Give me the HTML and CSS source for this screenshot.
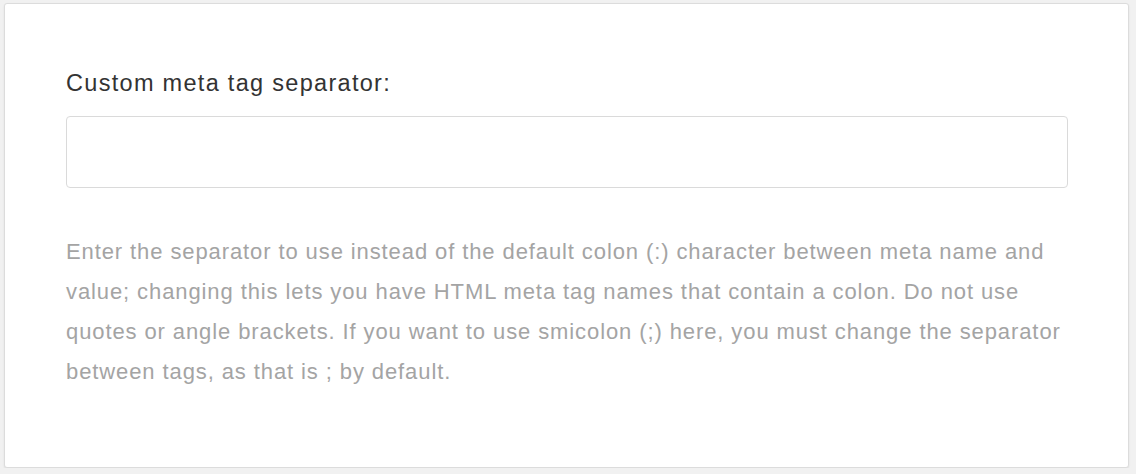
FILE: index.html
```html
<!DOCTYPE html>
<html lang="en">
<head>
    <meta charset="UTF-8">
    <meta name="viewport" content="width=device-width, initial-scale=1.0">
    <title>Meta tag separator</title>
    <link rel="stylesheet" href="styles.css">
</head>
<body>
  <div class="panel">
    <!-- separator field -->
    <div class="field">
      <label class="field-label" for="metaSeparator">Custom meta tag separator:</label>
      <input class="field-input" type="text" id="metaSeparator">
      <p class="field-help">
        Enter the separator to use instead of the default colon (:) character between meta name and value; changing this lets you have HTML meta tag names that contain a colon. Do not use quotes or angle brackets. If you want to use smicolon (;) here, you must change the separator between tags, as that is ; by default.
      </p>
    </div>
  </div>
</body>
</html>
```

FILE: styles.css
```css
/* 全局样式 */
body {
    margin: 0;
    padding: 0;
    background-color: #f1f1f1;
    font-family: 'Helvetica Neue', 'Liberation Sans', Arial, sans-serif;
}

/* 外部容器 */
.panel {
    margin: 3px 7px 0 4px;
    height: 465px;
    box-sizing: border-box;
    padding: 65px 60px 0 61px;
    background: #fff;
    border: 1px solid #dcdcdc;
    border-radius: 3px;
    box-shadow: 0 1px 2px rgba(0, 0, 0, 0.08);
}

.field-label {
    display: block;
    font-size: 23.5px;
    line-height: 28px;
    letter-spacing: 1.3px;
    color: #333;
}

.field-input {
    display: block;
    box-sizing: border-box;
    width: 100%;
    height: 72px;
    margin-top: 19px;
    border: 1px solid #dadada;
    border-radius: 4px;
    background: #fff;
    font-size: 20px;
    padding: 0 16px;
    outline: none;
}

.field-help {
    margin: 44px -10px 0 0;
    font-size: 22px;
    line-height: 40px;
    letter-spacing: 0.9px;
    color: #a4a4a4;
}
```
